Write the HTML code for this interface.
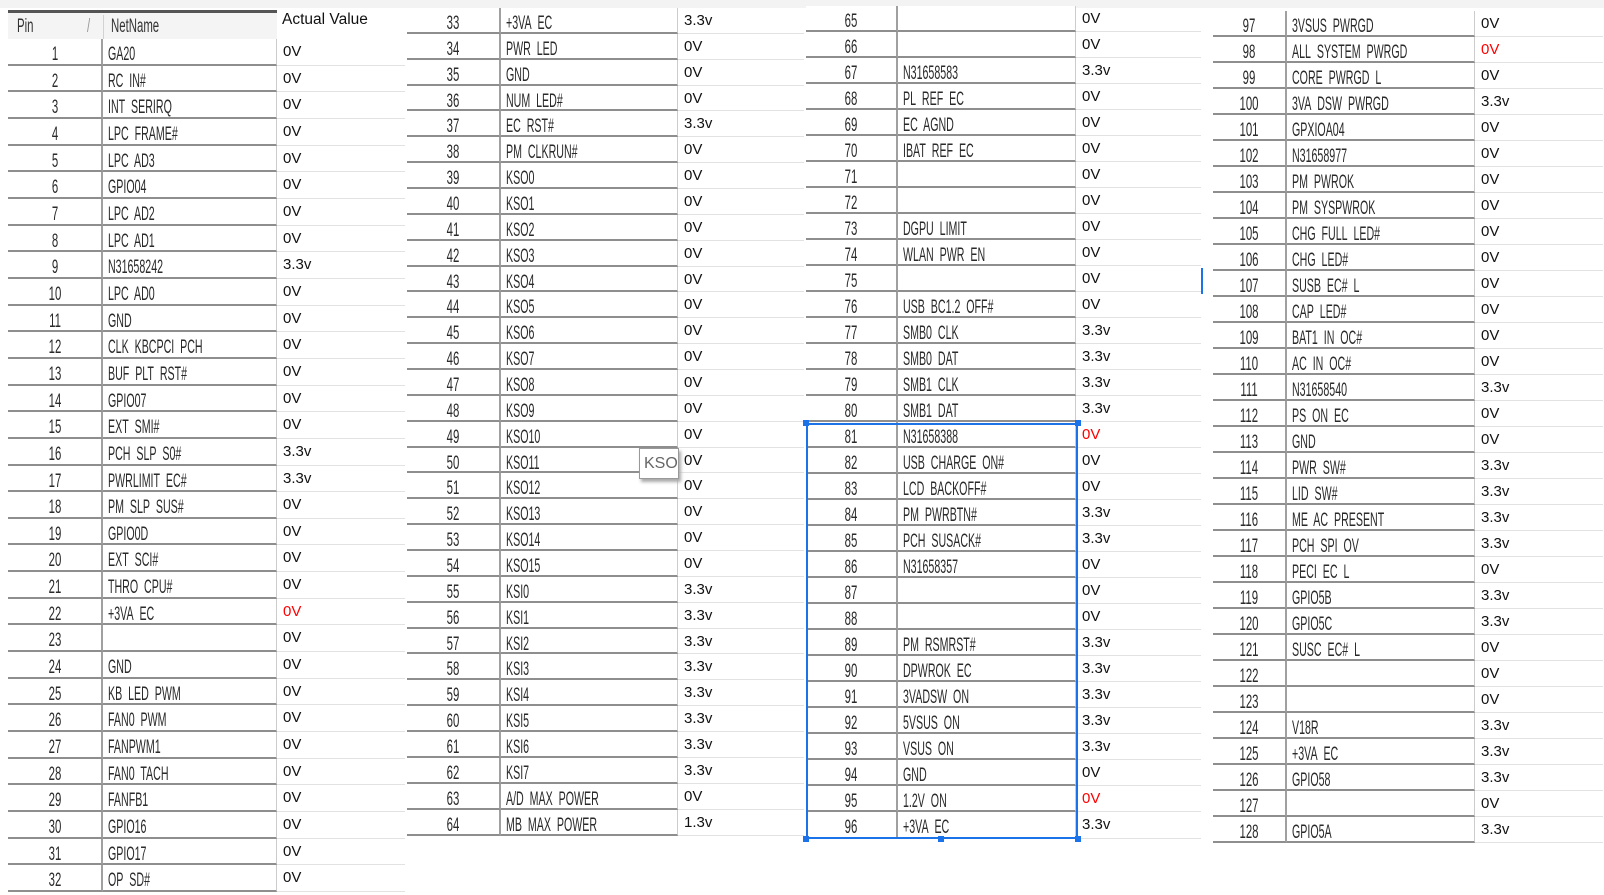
<!DOCTYPE html>
<html><head><meta charset="utf-8"><style>
body{margin:0;width:1604px;height:895px;background:#fff;position:relative;overflow:hidden;font-family:"Liberation Sans",sans-serif}
.g{position:absolute}
.r{display:flex;height:var(--h);box-sizing:border-box}
.r b,.r i{font-style:normal;font-weight:normal;font-size:19px;color:#2a2a2a;box-sizing:border-box;border-bottom:2px solid #8e8e8e;line-height:var(--h);padding-top:3px;white-space:nowrap;overflow:hidden;background:#fff}
.r b{width:var(--p);border-right:2px solid #a0a0a0;position:relative}
.r b s{position:absolute;left:50%;transform:translateX(-50%) scaleX(.6);text-decoration:none}
.r i{width:var(--n);padding-left:5px;border-right:1px solid #ccc}
.r i s{display:inline-block;transform:scaleX(.56);transform-origin:0 0;text-decoration:none}
.r u{text-decoration:none;width:var(--v);font-size:15px;color:#111;box-sizing:border-box;border-bottom:1px solid #e2e2e2;padding-left:6px;line-height:var(--h);padding-top:0}
.r u.red{color:#f00}
.hd{position:absolute;left:8px;top:10px;width:269px;height:29px;border-top:3px solid #555;background:#f4f4f4;box-sizing:border-box;font-size:19px;color:#333}
.hd span{position:absolute;top:3px;transform:scaleX(.6);transform-origin:0 0}
</style></head><body>
<div style="position:absolute;left:0;top:0;width:1604px;height:8px;background:#f3f3f3"></div>
<div class="hd"><span style="left:9px">Pin</span><span style="left:79px;color:#999">/</span><span style="left:95px;top:2px;height:24px;border-left:1px solid #bbb"></span><span style="left:103px">NetName</span></div>
<div style="position:absolute;left:282px;top:11px;font-size:15.5px;color:#111">Actual Value</div>

<div class="g" style="left:8px;top:39px;--h:26.66px;--p:95px;--n:174px;--v:128px">
<div class="r"><b><s>1</s></b><i><s>GA20</s></i><u>0V</u></div>
<div class="r"><b><s>2</s></b><i><s>RC&nbsp; IN#</s></i><u>0V</u></div>
<div class="r"><b><s>3</s></b><i><s>INT&nbsp; SERIRQ</s></i><u>0V</u></div>
<div class="r"><b><s>4</s></b><i><s>LPC&nbsp; FRAME#</s></i><u>0V</u></div>
<div class="r"><b><s>5</s></b><i><s>LPC&nbsp; AD3</s></i><u>0V</u></div>
<div class="r"><b><s>6</s></b><i><s>GPIO04</s></i><u>0V</u></div>
<div class="r"><b><s>7</s></b><i><s>LPC&nbsp; AD2</s></i><u>0V</u></div>
<div class="r"><b><s>8</s></b><i><s>LPC&nbsp; AD1</s></i><u>0V</u></div>
<div class="r"><b><s>9</s></b><i><s>N31658242</s></i><u>3.3v</u></div>
<div class="r"><b><s>10</s></b><i><s>LPC&nbsp; AD0</s></i><u>0V</u></div>
<div class="r"><b><s>11</s></b><i><s>GND</s></i><u>0V</u></div>
<div class="r"><b><s>12</s></b><i><s>CLK&nbsp; KBCPCI&nbsp; PCH</s></i><u>0V</u></div>
<div class="r"><b><s>13</s></b><i><s>BUF&nbsp; PLT&nbsp; RST#</s></i><u>0V</u></div>
<div class="r"><b><s>14</s></b><i><s>GPIO07</s></i><u>0V</u></div>
<div class="r"><b><s>15</s></b><i><s>EXT&nbsp; SMI#</s></i><u>0V</u></div>
<div class="r"><b><s>16</s></b><i><s>PCH&nbsp; SLP&nbsp; S0#</s></i><u>3.3v</u></div>
<div class="r"><b><s>17</s></b><i><s>PWRLIMIT&nbsp; EC#</s></i><u>3.3v</u></div>
<div class="r"><b><s>18</s></b><i><s>PM&nbsp; SLP&nbsp; SUS#</s></i><u>0V</u></div>
<div class="r"><b><s>19</s></b><i><s>GPIO0D</s></i><u>0V</u></div>
<div class="r"><b><s>20</s></b><i><s>EXT&nbsp; SCI#</s></i><u>0V</u></div>
<div class="r"><b><s>21</s></b><i><s>THRO&nbsp; CPU#</s></i><u>0V</u></div>
<div class="r"><b><s>22</s></b><i><s>+3VA&nbsp; EC</s></i><u class="red">0V</u></div>
<div class="r"><b><s>23</s></b><i></i><u>0V</u></div>
<div class="r"><b><s>24</s></b><i><s>GND</s></i><u>0V</u></div>
<div class="r"><b><s>25</s></b><i><s>KB&nbsp; LED&nbsp; PWM</s></i><u>0V</u></div>
<div class="r"><b><s>26</s></b><i><s>FAN0&nbsp; PWM</s></i><u>0V</u></div>
<div class="r"><b><s>27</s></b><i><s>FANPWM1</s></i><u>0V</u></div>
<div class="r"><b><s>28</s></b><i><s>FAN0&nbsp; TACH</s></i><u>0V</u></div>
<div class="r"><b><s>29</s></b><i><s>FANFB1</s></i><u>0V</u></div>
<div class="r"><b><s>30</s></b><i><s>GPIO16</s></i><u>0V</u></div>
<div class="r"><b><s>31</s></b><i><s>GPIO17</s></i><u>0V</u></div>
<div class="r"><b><s>32</s></b><i><s>OP&nbsp; SD#</s></i><u>0V</u></div>
</div>

<div class="g" style="left:407px;top:8px;--h:25.86px;--p:94px;--n:177px;--v:126px">
<div class="r"><b><s>33</s></b><i><s>+3VA&nbsp; EC</s></i><u>3.3v</u></div>
<div class="r"><b><s>34</s></b><i><s>PWR&nbsp; LED</s></i><u>0V</u></div>
<div class="r"><b><s>35</s></b><i><s>GND</s></i><u>0V</u></div>
<div class="r"><b><s>36</s></b><i><s>NUM&nbsp; LED#</s></i><u>0V</u></div>
<div class="r"><b><s>37</s></b><i><s>EC&nbsp; RST#</s></i><u>3.3v</u></div>
<div class="r"><b><s>38</s></b><i><s>PM&nbsp; CLKRUN#</s></i><u>0V</u></div>
<div class="r"><b><s>39</s></b><i><s>KSO0</s></i><u>0V</u></div>
<div class="r"><b><s>40</s></b><i><s>KSO1</s></i><u>0V</u></div>
<div class="r"><b><s>41</s></b><i><s>KSO2</s></i><u>0V</u></div>
<div class="r"><b><s>42</s></b><i><s>KSO3</s></i><u>0V</u></div>
<div class="r"><b><s>43</s></b><i><s>KSO4</s></i><u>0V</u></div>
<div class="r"><b><s>44</s></b><i><s>KSO5</s></i><u>0V</u></div>
<div class="r"><b><s>45</s></b><i><s>KSO6</s></i><u>0V</u></div>
<div class="r"><b><s>46</s></b><i><s>KSO7</s></i><u>0V</u></div>
<div class="r"><b><s>47</s></b><i><s>KSO8</s></i><u>0V</u></div>
<div class="r"><b><s>48</s></b><i><s>KSO9</s></i><u>0V</u></div>
<div class="r"><b><s>49</s></b><i><s>KSO10</s></i><u>0V</u></div>
<div class="r"><b><s>50</s></b><i><s>KSO11</s></i><u>0V</u></div>
<div class="r"><b><s>51</s></b><i><s>KSO12</s></i><u>0V</u></div>
<div class="r"><b><s>52</s></b><i><s>KSO13</s></i><u>0V</u></div>
<div class="r"><b><s>53</s></b><i><s>KSO14</s></i><u>0V</u></div>
<div class="r"><b><s>54</s></b><i><s>KSO15</s></i><u>0V</u></div>
<div class="r"><b><s>55</s></b><i><s>KSI0</s></i><u>3.3v</u></div>
<div class="r"><b><s>56</s></b><i><s>KSI1</s></i><u>3.3v</u></div>
<div class="r"><b><s>57</s></b><i><s>KSI2</s></i><u>3.3v</u></div>
<div class="r"><b><s>58</s></b><i><s>KSI3</s></i><u>3.3v</u></div>
<div class="r"><b><s>59</s></b><i><s>KSI4</s></i><u>3.3v</u></div>
<div class="r"><b><s>60</s></b><i><s>KSI5</s></i><u>3.3v</u></div>
<div class="r"><b><s>61</s></b><i><s>KSI6</s></i><u>3.3v</u></div>
<div class="r"><b><s>62</s></b><i><s>KSI7</s></i><u>3.3v</u></div>
<div class="r"><b><s>63</s></b><i><s>A/D&nbsp; MAX&nbsp; POWER</s></i><u>0V</u></div>
<div class="r"><b><s>64</s></b><i><s>MB&nbsp; MAX&nbsp; POWER</s></i><u>1.3v</u></div>
</div>
<div style="position:absolute;left:639px;top:448px;width:40px;height:31px;background:#fff;border:1px solid #999;box-shadow:2px 3px 3px #aaa;font-size:16px;color:#666;line-height:30px;padding-left:4px;box-sizing:border-box;overflow:hidden">KSO</div>

<div class="g" style="left:806px;top:6px;--h:26.03px;--p:92px;--n:178px;--v:125px">
<div class="r"><b><s>65</s></b><i></i><u>0V</u></div>
<div class="r"><b><s>66</s></b><i></i><u>0V</u></div>
<div class="r"><b><s>67</s></b><i><s>N31658583</s></i><u>3.3v</u></div>
<div class="r"><b><s>68</s></b><i><s>PL&nbsp; REF&nbsp; EC</s></i><u>0V</u></div>
<div class="r"><b><s>69</s></b><i><s>EC&nbsp; AGND</s></i><u>0V</u></div>
<div class="r"><b><s>70</s></b><i><s>IBAT&nbsp; REF&nbsp; EC</s></i><u>0V</u></div>
<div class="r"><b><s>71</s></b><i></i><u>0V</u></div>
<div class="r"><b><s>72</s></b><i></i><u>0V</u></div>
<div class="r"><b><s>73</s></b><i><s>DGPU&nbsp; LIMIT</s></i><u>0V</u></div>
<div class="r"><b><s>74</s></b><i><s>WLAN&nbsp; PWR&nbsp; EN</s></i><u>0V</u></div>
<div class="r"><b><s>75</s></b><i></i><u>0V</u></div>
<div class="r"><b><s>76</s></b><i><s>USB&nbsp; BC1.2&nbsp; OFF#</s></i><u>0V</u></div>
<div class="r"><b><s>77</s></b><i><s>SMB0&nbsp; CLK</s></i><u>3.3v</u></div>
<div class="r"><b><s>78</s></b><i><s>SMB0&nbsp; DAT</s></i><u>3.3v</u></div>
<div class="r"><b><s>79</s></b><i><s>SMB1&nbsp; CLK</s></i><u>3.3v</u></div>
<div class="r"><b><s>80</s></b><i><s>SMB1&nbsp; DAT</s></i><u>3.3v</u></div>
<div class="r"><b><s>81</s></b><i><s>N31658388</s></i><u class="red">0V</u></div>
<div class="r"><b><s>82</s></b><i><s>USB&nbsp; CHARGE&nbsp; ON#</s></i><u>0V</u></div>
<div class="r"><b><s>83</s></b><i><s>LCD&nbsp; BACKOFF#</s></i><u>0V</u></div>
<div class="r"><b><s>84</s></b><i><s>PM&nbsp; PWRBTN#</s></i><u>3.3v</u></div>
<div class="r"><b><s>85</s></b><i><s>PCH&nbsp; SUSACK#</s></i><u>3.3v</u></div>
<div class="r"><b><s>86</s></b><i><s>N31658357</s></i><u>0V</u></div>
<div class="r"><b><s>87</s></b><i></i><u>0V</u></div>
<div class="r"><b><s>88</s></b><i></i><u>0V</u></div>
<div class="r"><b><s>89</s></b><i><s>PM&nbsp; RSMRST#</s></i><u>3.3v</u></div>
<div class="r"><b><s>90</s></b><i><s>DPWROK&nbsp; EC</s></i><u>3.3v</u></div>
<div class="r"><b><s>91</s></b><i><s>3VADSW&nbsp; ON</s></i><u>3.3v</u></div>
<div class="r"><b><s>92</s></b><i><s>5VSUS&nbsp; ON</s></i><u>3.3v</u></div>
<div class="r"><b><s>93</s></b><i><s>VSUS&nbsp; ON</s></i><u>3.3v</u></div>
<div class="r"><b><s>94</s></b><i><s>GND</s></i><u>0V</u></div>
<div class="r"><b><s>95</s></b><i><s>1.2V&nbsp; ON</s></i><u class="red">0V</u></div>
<div class="r"><b><s>96</s></b><i><s>+3VA&nbsp; EC</s></i><u>3.3v</u></div>
</div>
<div style="position:absolute;left:806px;top:423px;width:272px;height:416px;border:2px solid #1a73e8;box-sizing:border-box"></div>
<div style="position:absolute;left:803px;top:420px;width:6px;height:6px;background:#1a73e8"></div>
<div style="position:absolute;left:1075px;top:420px;width:6px;height:6px;background:#1a73e8"></div>
<div style="position:absolute;left:803px;top:836px;width:6px;height:6px;background:#1a73e8"></div>
<div style="position:absolute;left:938px;top:836px;width:6px;height:6px;background:#1a73e8"></div>
<div style="position:absolute;left:1075px;top:836px;width:6px;height:6px;background:#1a73e8"></div>
<div style="position:absolute;left:1201px;top:268px;width:2px;height:26px;background:#1a73e8"></div>

<div class="g" style="left:1213px;top:11px;--h:26px;--p:74px;--n:188px;--v:128px">
<div class="r"><b><s>97</s></b><i><s>3VSUS&nbsp; PWRGD</s></i><u>0V</u></div>
<div class="r"><b><s>98</s></b><i><s>ALL&nbsp; SYSTEM&nbsp; PWRGD</s></i><u class="red">0V</u></div>
<div class="r"><b><s>99</s></b><i><s>CORE&nbsp; PWRGD&nbsp; L</s></i><u>0V</u></div>
<div class="r"><b><s>100</s></b><i><s>3VA&nbsp; DSW&nbsp; PWRGD</s></i><u>3.3v</u></div>
<div class="r"><b><s>101</s></b><i><s>GPXIOA04</s></i><u>0V</u></div>
<div class="r"><b><s>102</s></b><i><s>N31658977</s></i><u>0V</u></div>
<div class="r"><b><s>103</s></b><i><s>PM&nbsp; PWROK</s></i><u>0V</u></div>
<div class="r"><b><s>104</s></b><i><s>PM&nbsp; SYSPWROK</s></i><u>0V</u></div>
<div class="r"><b><s>105</s></b><i><s>CHG&nbsp; FULL&nbsp; LED#</s></i><u>0V</u></div>
<div class="r"><b><s>106</s></b><i><s>CHG&nbsp; LED#</s></i><u>0V</u></div>
<div class="r"><b><s>107</s></b><i><s>SUSB&nbsp; EC#&nbsp; L</s></i><u>0V</u></div>
<div class="r"><b><s>108</s></b><i><s>CAP&nbsp; LED#</s></i><u>0V</u></div>
<div class="r"><b><s>109</s></b><i><s>BAT1&nbsp; IN&nbsp; OC#</s></i><u>0V</u></div>
<div class="r"><b><s>110</s></b><i><s>AC&nbsp; IN&nbsp; OC#</s></i><u>0V</u></div>
<div class="r"><b><s>111</s></b><i><s>N31658540</s></i><u>3.3v</u></div>
<div class="r"><b><s>112</s></b><i><s>PS&nbsp; ON&nbsp; EC</s></i><u>0V</u></div>
<div class="r"><b><s>113</s></b><i><s>GND</s></i><u>0V</u></div>
<div class="r"><b><s>114</s></b><i><s>PWR&nbsp; SW#</s></i><u>3.3v</u></div>
<div class="r"><b><s>115</s></b><i><s>LID&nbsp; SW#</s></i><u>3.3v</u></div>
<div class="r"><b><s>116</s></b><i><s>ME&nbsp; AC&nbsp; PRESENT</s></i><u>3.3v</u></div>
<div class="r"><b><s>117</s></b><i><s>PCH&nbsp; SPI&nbsp; OV</s></i><u>3.3v</u></div>
<div class="r"><b><s>118</s></b><i><s>PECI&nbsp; EC&nbsp; L</s></i><u>0V</u></div>
<div class="r"><b><s>119</s></b><i><s>GPIO5B</s></i><u>3.3v</u></div>
<div class="r"><b><s>120</s></b><i><s>GPIO5C</s></i><u>3.3v</u></div>
<div class="r"><b><s>121</s></b><i><s>SUSC&nbsp; EC#&nbsp; L</s></i><u>0V</u></div>
<div class="r"><b><s>122</s></b><i></i><u>0V</u></div>
<div class="r"><b><s>123</s></b><i></i><u>0V</u></div>
<div class="r"><b><s>124</s></b><i><s>V18R</s></i><u>3.3v</u></div>
<div class="r"><b><s>125</s></b><i><s>+3VA&nbsp; EC</s></i><u>3.3v</u></div>
<div class="r"><b><s>126</s></b><i><s>GPIO58</s></i><u>3.3v</u></div>
<div class="r"><b><s>127</s></b><i></i><u>0V</u></div>
<div class="r"><b><s>128</s></b><i><s>GPIO5A</s></i><u>3.3v</u></div>
</div>
</body></html>
